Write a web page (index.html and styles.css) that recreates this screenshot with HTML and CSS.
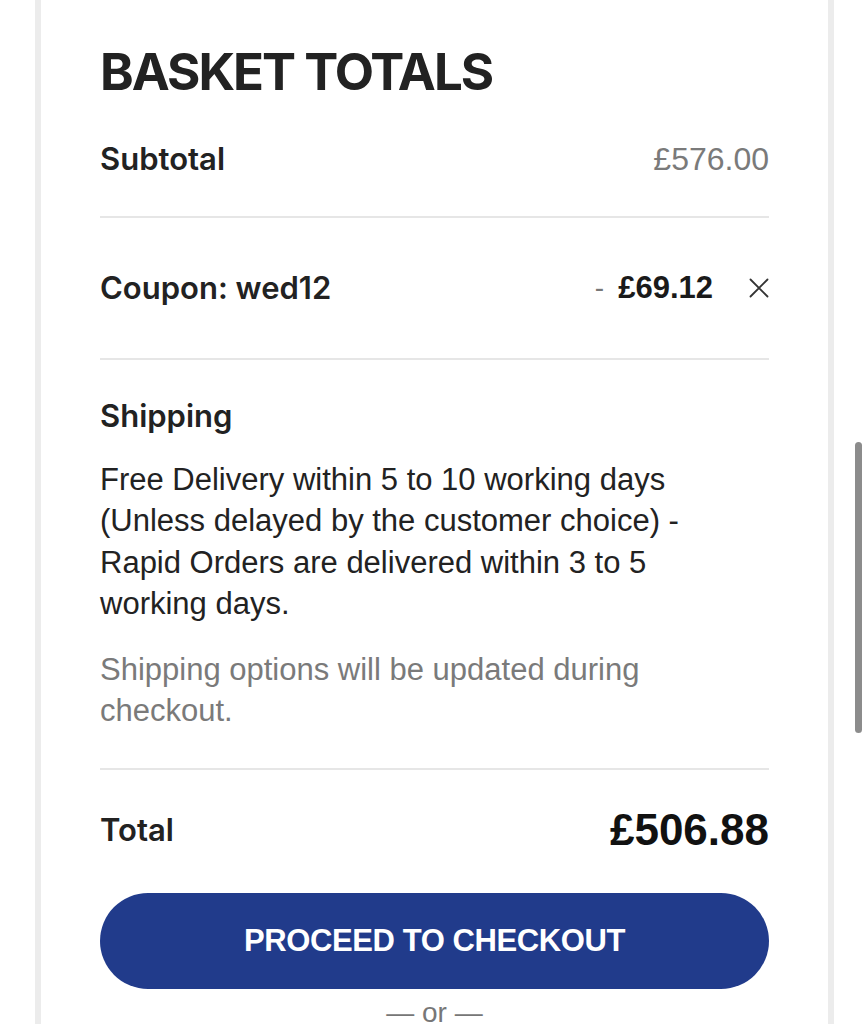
FILE: index.html
```html
<!DOCTYPE html>
<html lang="en">
<head>
<meta charset="utf-8">
<title>Basket Totals</title>
<link rel="stylesheet" href="styles.css">
</head>
<body>
<div class="card">
  <h2 class="title">BASKET TOTALS</h2>
  <div class="row row-sub">
    <span class="label">Subtotal</span>
    <span class="amount muted">£576.00</span>
  </div>
  <div class="row row-coupon">
    <span class="label">Coupon: wed12</span>
    <span class="coupon-value">
      <span class="minus">-</span>
      <span class="amount strong">£69.12</span>
      <svg class="remove" width="20" height="20" viewBox="0 0 20 20" aria-label="Remove coupon">
        <path d="M1.5 1.5 L18.5 18.5 M18.5 1.5 L1.5 18.5" stroke="#333" stroke-width="1.8" fill="none" stroke-linecap="round"/>
      </svg>
    </span>
  </div>
  <div class="shipping">
    <div class="label">Shipping</div>
    <p class="ship-text">Free Delivery within 5 to 10 working days (Unless delayed by the customer choice) - Rapid Orders are delivered within 3 to 5 working days.</p>
    <p class="ship-note">Shipping options will be updated during checkout.</p>
  </div>
  <div class="row row-total">
    <span class="label">Total</span>
    <span class="amount total">£506.88</span>
  </div>
  <a class="btn" href="#">PROCEED TO CHECKOUT</a>
  <div class="or">— or —</div>
</div>
<div class="scrollbar"></div>
</body>
</html>
```
FILE: styles.css
```css
html, body {
  margin: 0;
  padding: 0;
  background: #ffffff;
}
body {
  height: 1024px;
  overflow: hidden;
  position: relative;
  font-family: "Liberation Sans", Arial, sans-serif;
  color: #222222;
}
.card {
  margin-left: 35px;
  width: 669px;
  padding: 0 59px;
  min-height: 1024px;
  border-left: 6px solid #ececec;
  border-right: 6px solid #ececec;
  box-sizing: content-box;
}
.title {
  margin: 0 0 4px 0;
  padding-top: 46px;
  font-family: "Inter", sans-serif;
  font-weight: 700;
  font-size: 51px;
  line-height: 52px;
  color: #222222;
  letter-spacing: -2px;
}
.row {
  display: flex;
  justify-content: space-between;
  align-items: center;
  border-bottom: 2px solid #e6e6e6;
}
.row-sub { height: 114px; }
.row-coupon { height: 140px; }
.row-total { height: 120px; border-bottom: none; }
.label {
  font-family: "Inter", sans-serif;
  font-weight: 600;
  font-size: 31px;
  line-height: 34px;
  color: #222222;
}
.amount {
  font-family: "Liberation Sans", Arial, sans-serif;
}
.muted {
  font-size: 32px;
  color: #7a7a7a;
}
.coupon-value {
  display: flex;
  align-items: center;
}
.minus {
  font-size: 28px;
  color: #777777;
  margin-right: 14px;
}
.strong {
  font-weight: 700;
  font-size: 31px;
  color: #1a1a1a;
}
.remove {
  margin-left: 36px;
  display: block;
}
.shipping {
  padding-top: 39px;
  padding-bottom: 36px;
  border-bottom: 2px solid #e6e6e6;
}
.shipping .label { display: block; }
.ship-text {
  margin: 26px 0 0 0;
  max-width: 660px;
  font-size: 31px;
  line-height: 41.3px;
  color: #222222;
}
.ship-note {
  margin: 25px 0 0 0;
  max-width: 660px;
  font-size: 31px;
  line-height: 41.3px;
  color: #7a7a7a;
}
.total {
  font-weight: 700;
  font-size: 44px;
  color: #111111;
}
.btn {
  display: flex;
  align-items: center;
  justify-content: center;
  margin-top: 3px;
  height: 96px;
  border-radius: 48px;
  background: #213b8b;
  color: #ffffff;
  text-decoration: none;
  font-family: "Liberation Sans", Arial, sans-serif;
  font-weight: 700;
  font-size: 31px;
  letter-spacing: -0.4px;
}
.or {
  margin-top: 8px;
  text-align: center;
  font-size: 28px;
  line-height: 32px;
  color: #777777;
}
.scrollbar {
  position: absolute;
  left: 855px;
  top: 442px;
  width: 7px;
  height: 291px;
  border-radius: 4px;
  background: #8c8c8c;
}
```
